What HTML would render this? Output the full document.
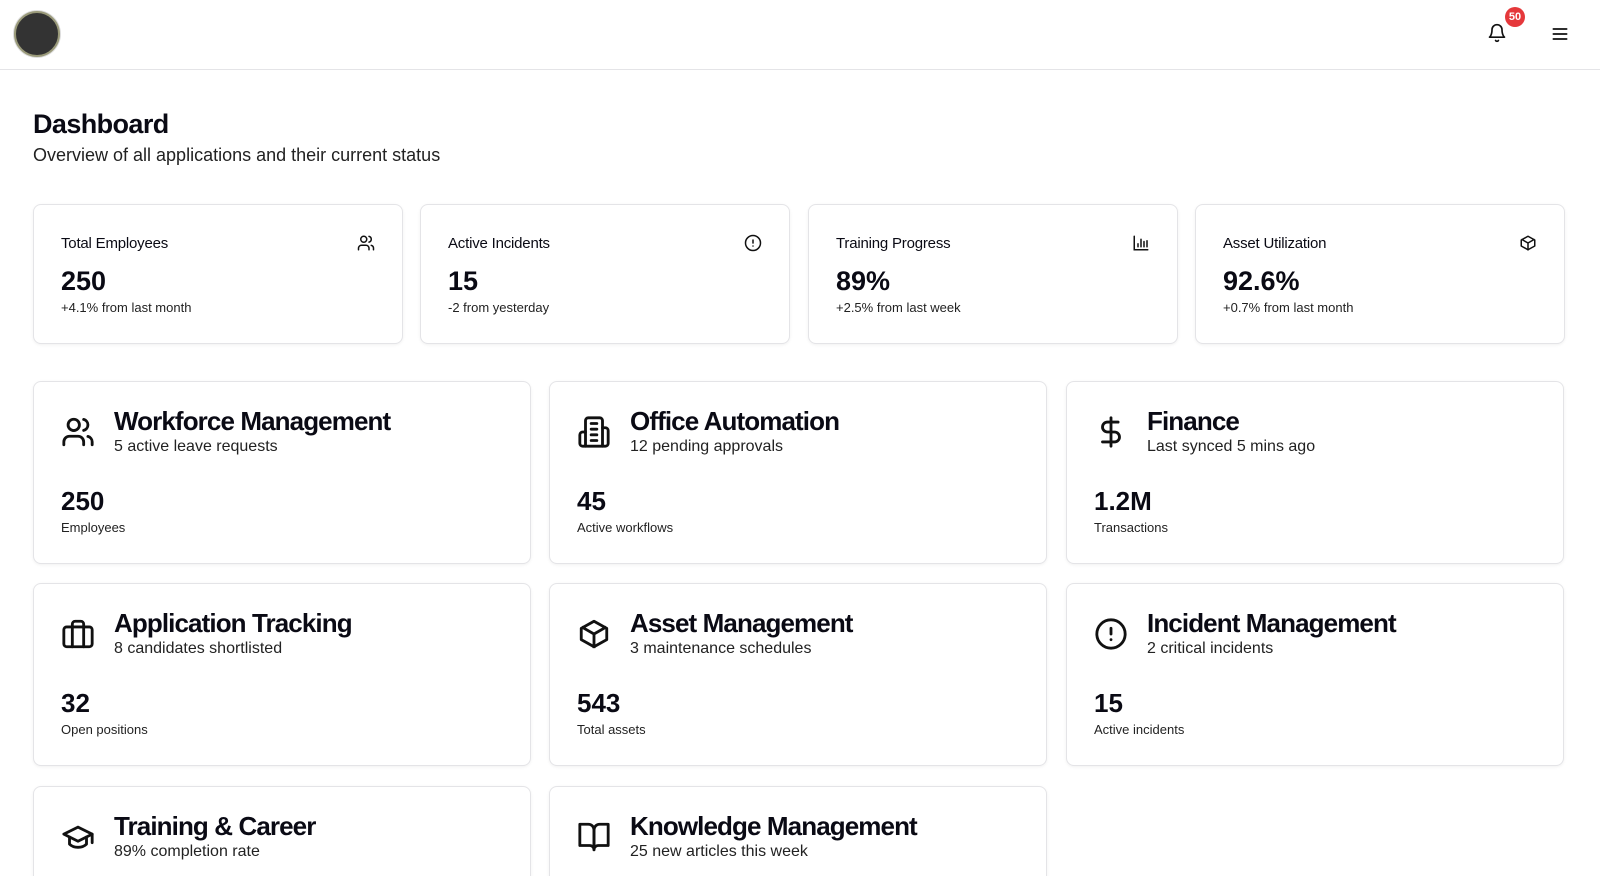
<!DOCTYPE html>
<html><head><meta charset="utf-8"><style>
*{box-sizing:border-box;margin:0;padding:0}
html,body{width:1600px;height:876px;overflow:hidden}
body{background:#fff;font-family:"Liberation Sans",sans-serif;color:#0a0a14;position:relative}
.hdr{position:absolute;left:0;top:0;width:1600px;height:70px;border-bottom:1px solid #e4e4e7}
.logo{position:absolute;left:14px;top:11px;width:46px;height:46px;border-radius:50%;background:#333;border:2px solid #9a9a7a;box-shadow:0 0 0 1px #ddd}
.bell{position:absolute;left:1487px;top:23px}
.badge{position:absolute;left:1505px;top:7px;width:20px;height:20px;border-radius:50%;background:#e5383b;color:#fff;font-size:11px;font-weight:bold;text-align:center;line-height:20px}
.menu{position:absolute;left:1550px;top:24px}
h1{position:absolute;left:33px;top:109px;font-size:27px;font-weight:bold;letter-spacing:-0.6px}
.sub{position:absolute;left:33px;top:145px;font-size:18px;color:#222}
.card{position:absolute;border:1px solid #e4e4e7;border-radius:8px;background:#fff;box-shadow:0 1px 3px rgba(0,0,0,.06)}
.stat{top:204px;width:370px;height:140px}
.stat .t{position:absolute;left:27px;top:30px;font-size:15px;letter-spacing:-0.2px}
.stat .v{position:absolute;left:27px;top:61px;font-size:27px;font-weight:bold}
.stat .s{position:absolute;left:27px;top:95px;font-size:13px;color:#222}
.stat svg{position:absolute;right:27px;top:29px}
.app{width:498px;height:183px}
.app svg{position:absolute;left:27px;top:33px}
.app .t{position:absolute;left:80px;top:24px;font-size:26px;font-weight:bold;letter-spacing:-0.9px}
.app .s{position:absolute;left:80px;top:56px;font-size:16px;color:#222}
.app .v{position:absolute;left:27px;top:104px;font-size:26px;font-weight:bold}
.app .l{position:absolute;left:27px;top:138px;font-size:13px;color:#222}
</style></head><body>
<div class="hdr">
<div class="logo"></div>
<svg class="bell" width="20" height="20" viewBox="0 0 24 24" fill="none" stroke="#111" stroke-width="2" stroke-linecap="round" stroke-linejoin="round"><path d="M6 8a6 6 0 0 1 12 0c0 7 3 9 3 9H3s3-2 3-9"/><path d="M10.3 21a1.94 1.94 0 0 0 3.4 0"/></svg>
<div class="badge">50</div>
<svg class="menu" width="20" height="20" viewBox="0 0 24 24" fill="none" stroke="#111" stroke-width="2" stroke-linecap="round"><path d="M4 6h16M4 12h16M4 18h16"/></svg>
</div>
<h1>Dashboard</h1>
<div class="sub">Overview of all applications and their current status</div>

<div class="card stat" style="left:33px"><div class="t">Total Employees</div><svg width="18" height="18" viewBox="0 0 24 24" fill="none" stroke="#111" stroke-width="2" stroke-linecap="round"><path d="M16 21v-2a4 4 0 0 0-4-4H6a4 4 0 0 0-4 4v2"/><circle cx="9" cy="7" r="4"/><path d="M22 21v-2a4 4 0 0 0-3-3.87M16 3.13a4 4 0 0 1 0 7.75"/></svg><div class="v">250</div><div class="s">+4.1% from last month</div></div>
<div class="card stat" style="left:420px"><div class="t">Active Incidents</div><svg width="18" height="18" viewBox="0 0 24 24" fill="none" stroke="#111" stroke-width="2" stroke-linecap="round"><circle cx="12" cy="12" r="10"/><path d="M12 8v4M12 16h.01"/></svg><div class="v">15</div><div class="s">-2 from yesterday</div></div>
<div class="card stat" style="left:808px"><div class="t">Training Progress</div><svg width="18" height="18" viewBox="0 0 24 24" fill="none" stroke="#111" stroke-width="2" stroke-linecap="round"><path d="M3 3v18h18M8 17v-4M12 17V7M16 17v-7M20 17V9"/></svg><div class="v">89%</div><div class="s">+2.5% from last week</div></div>
<div class="card stat" style="left:1195px"><div class="t">Asset Utilization</div><svg width="18" height="18" viewBox="0 0 24 24" fill="none" stroke="#111" stroke-width="2" stroke-linejoin="round"><path d="M21 8l-9-5-9 5v8l9 5 9-5z"/><path d="M3.3 7 12 12l8.7-5M12 22V12"/></svg><div class="v">92.6%</div><div class="s">+0.7% from last month</div></div>

<div class="card app" style="left:33px;top:381px"><svg width="34" height="34" viewBox="0 0 24 24" fill="none" stroke="#111" stroke-width="2" stroke-linecap="round"><path d="M16 21v-2a4 4 0 0 0-4-4H6a4 4 0 0 0-4 4v2"/><circle cx="9" cy="7" r="4"/><path d="M22 21v-2a4 4 0 0 0-3-3.87M16 3.13a4 4 0 0 1 0 7.75"/></svg><div class="t">Workforce Management</div><div class="s">5 active leave requests</div><div class="v">250</div><div class="l">Employees</div></div>
<div class="card app" style="left:549px;top:381px"><svg width="34" height="34" viewBox="0 0 24 24" fill="none" stroke="#111" stroke-width="2" stroke-linecap="round" stroke-linejoin="round"><path d="M6 22V4a2 2 0 0 1 2-2h8a2 2 0 0 1 2 2v18z"/><path d="M6 12H4a2 2 0 0 0-2 2v6a2 2 0 0 0 2 2h2M18 9h2a2 2 0 0 1 2 2v9a2 2 0 0 1-2 2h-2M10 6h4M10 10h4M10 14h4M10 18h4"/></svg><div class="t">Office Automation</div><div class="s">12 pending approvals</div><div class="v">45</div><div class="l">Active workflows</div></div>
<div class="card app" style="left:1066px;top:381px"><svg width="34" height="34" viewBox="0 0 24 24" fill="none" stroke="#111" stroke-width="2" stroke-linecap="round"><path d="M12 2v20M17 5H9.5a3.5 3.5 0 0 0 0 7h5a3.5 3.5 0 0 1 0 7H6"/></svg><div class="t">Finance</div><div class="s">Last synced 5 mins ago</div><div class="v">1.2M</div><div class="l">Transactions</div></div>

<div class="card app" style="left:33px;top:583px"><svg width="34" height="34" viewBox="0 0 24 24" fill="none" stroke="#111" stroke-width="2" stroke-linecap="round"><rect x="2" y="7" width="20" height="14" rx="2"/><path d="M16 21V5a2 2 0 0 0-2-2h-4a2 2 0 0 0-2 2v16M8 7v14"/></svg><div class="t">Application Tracking</div><div class="s">8 candidates shortlisted</div><div class="v">32</div><div class="l">Open positions</div></div>
<div class="card app" style="left:549px;top:583px"><svg width="34" height="34" viewBox="0 0 24 24" fill="none" stroke="#111" stroke-width="2" stroke-linejoin="round"><path d="M21 8l-9-5-9 5v8l9 5 9-5z"/><path d="M3.3 7 12 12l8.7-5M12 22V12"/></svg><div class="t">Asset Management</div><div class="s">3 maintenance schedules</div><div class="v">543</div><div class="l">Total assets</div></div>
<div class="card app" style="left:1066px;top:583px"><svg width="34" height="34" viewBox="0 0 24 24" fill="none" stroke="#111" stroke-width="2" stroke-linecap="round"><circle cx="12" cy="12" r="10"/><path d="M12 8v4M12 16h.01"/></svg><div class="t">Incident Management</div><div class="s">2 critical incidents</div><div class="v">15</div><div class="l">Active incidents</div></div>

<div class="card app" style="left:33px;top:786px"><svg width="34" height="34" viewBox="0 0 24 24" fill="none" stroke="#111" stroke-width="2" stroke-linecap="round" stroke-linejoin="round"><path d="M22 10 12 5 2 10l10 5z"/><path d="M6 12v5c3 3 9 3 12 0v-5M22 10v6"/></svg><div class="t">Training &amp; Career</div><div class="s">89% completion rate</div></div>
<div class="card app" style="left:549px;top:786px"><svg width="34" height="34" viewBox="0 0 24 24" fill="none" stroke="#111" stroke-width="2" stroke-linecap="round" stroke-linejoin="round"><path d="M2 3h6a4 4 0 0 1 4 4v14a3 3 0 0 0-3-3H2z"/><path d="M22 3h-6a4 4 0 0 0-4 4v14a3 3 0 0 1 3-3h7z"/></svg><div class="t">Knowledge Management</div><div class="s">25 new articles this week</div></div>
</body></html>
